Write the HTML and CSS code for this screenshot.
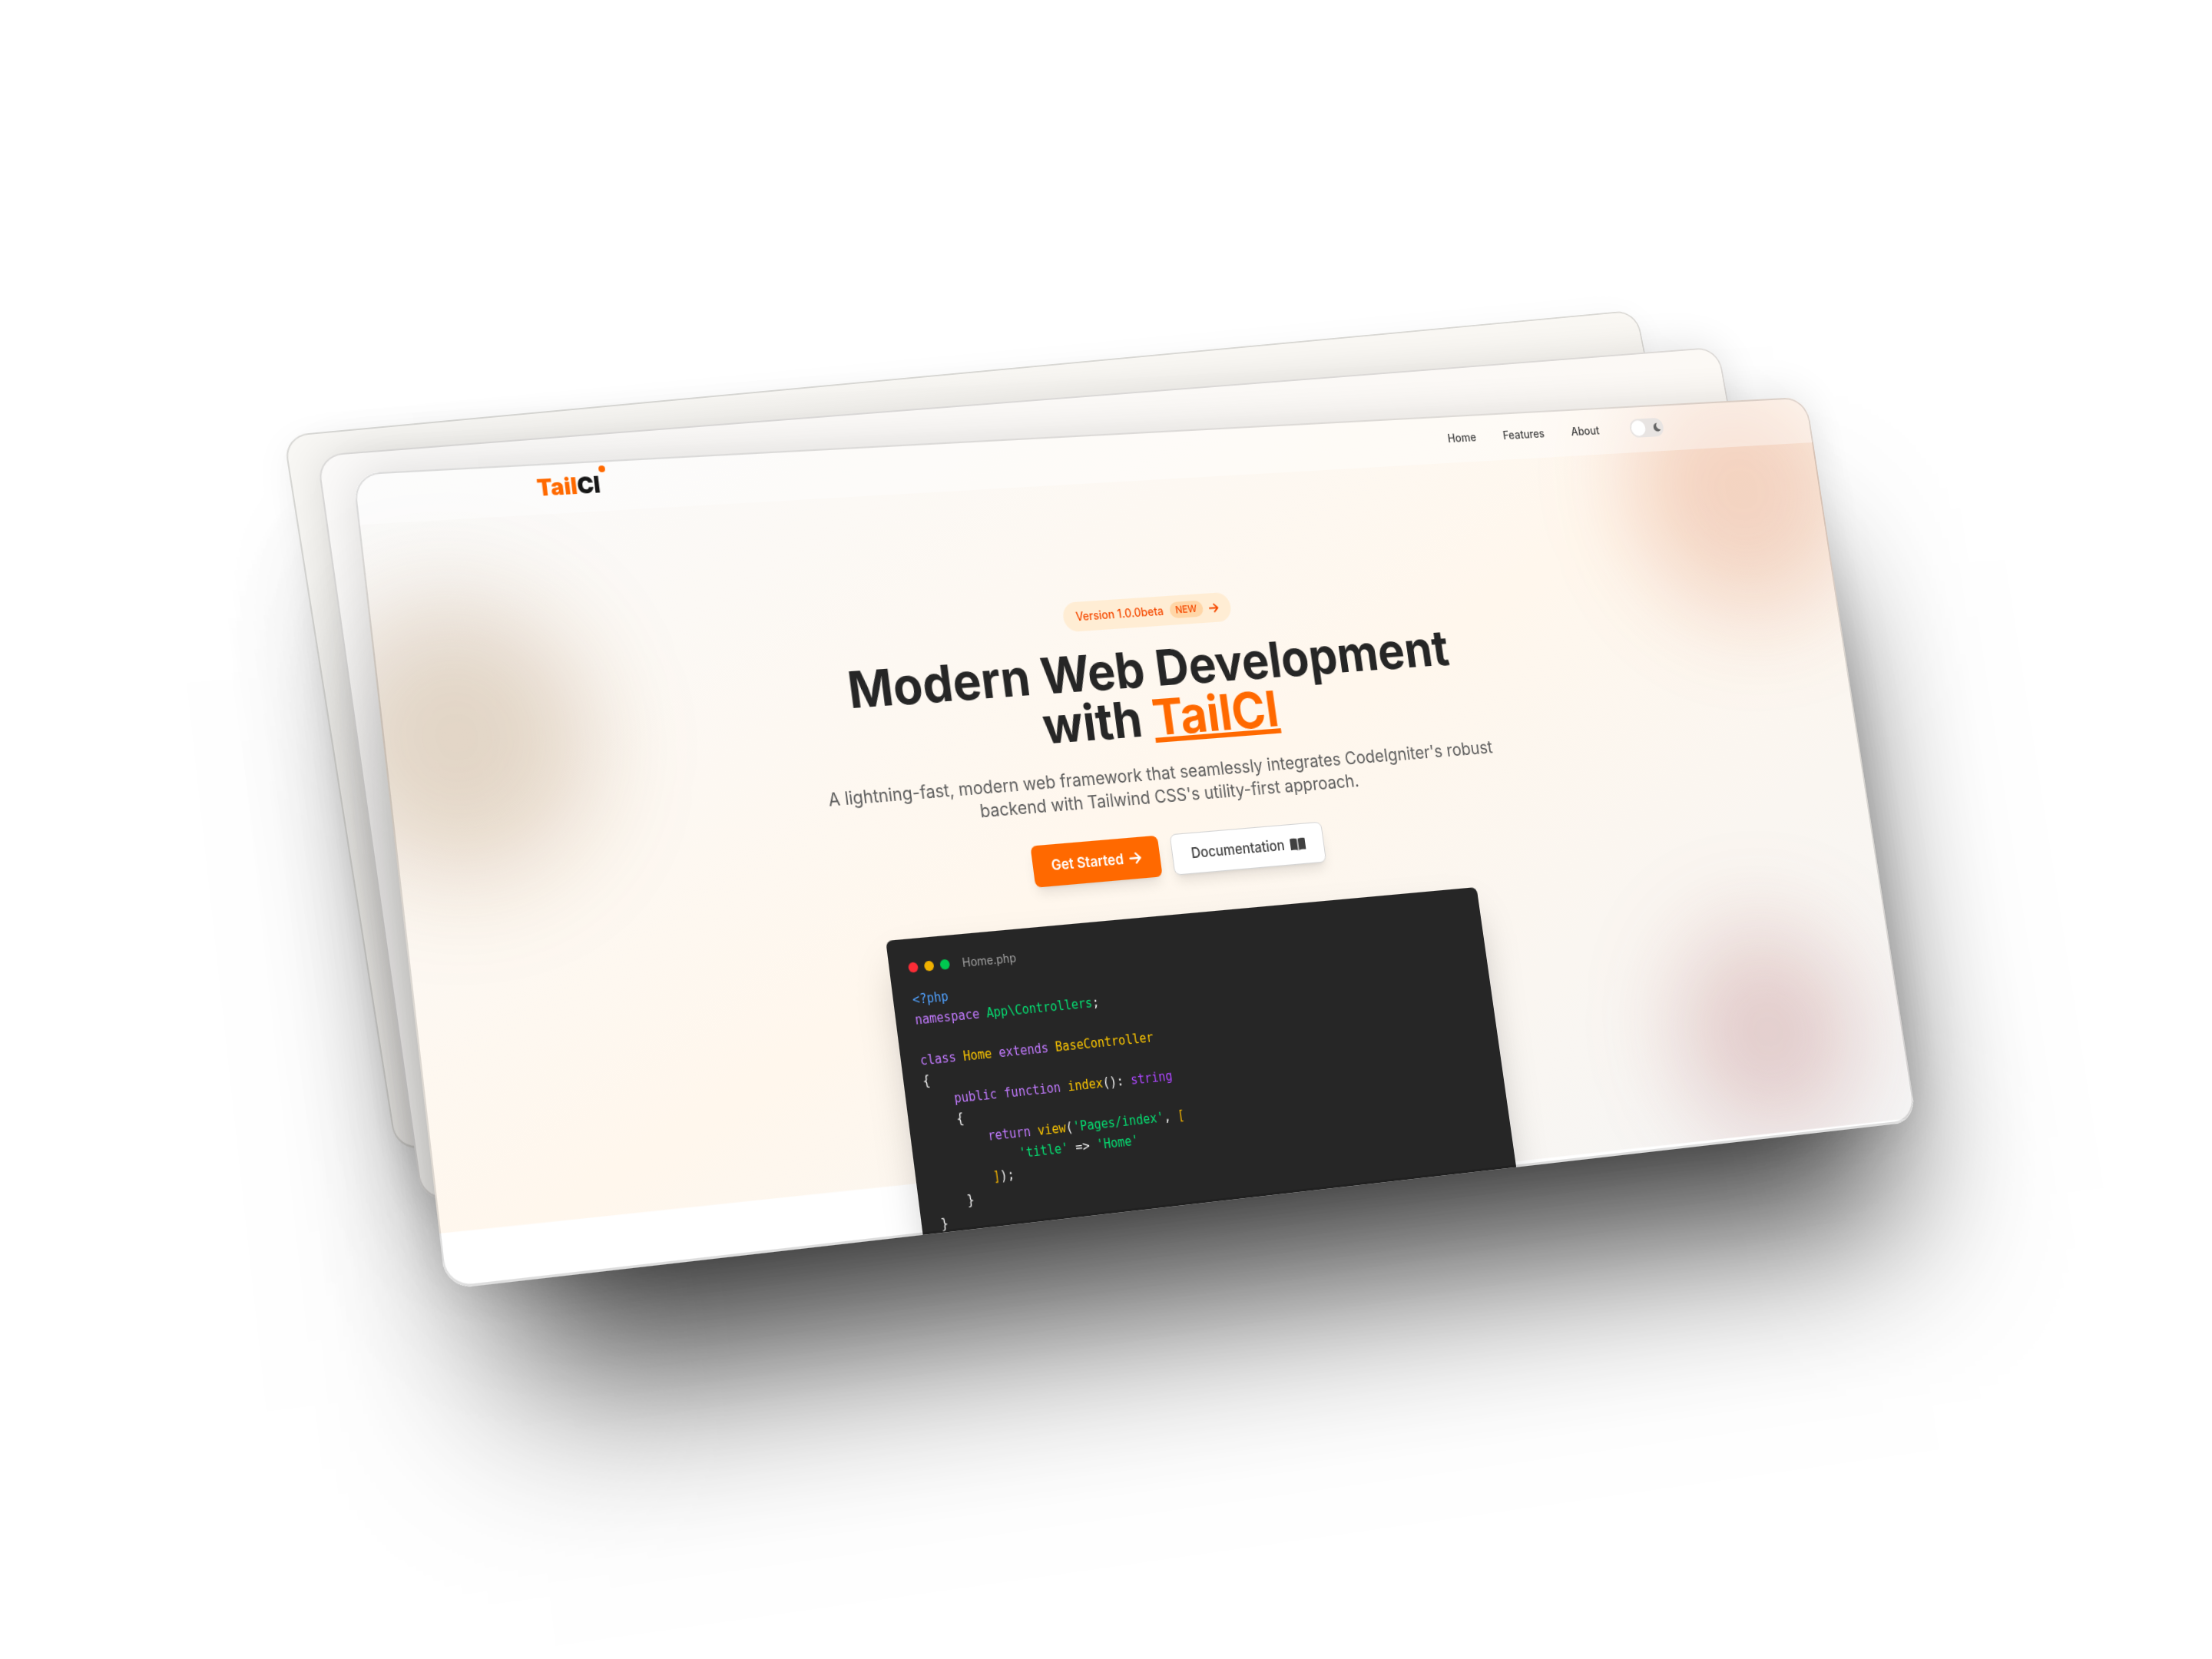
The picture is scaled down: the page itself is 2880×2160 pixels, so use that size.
FILE: index.html
```html
<!DOCTYPE html>
<html lang="en">
<head>
<meta charset="utf-8">
<meta name="viewport" content="width=device-width, initial-scale=1">
<title>TailCI</title>
<link rel="stylesheet" href="styles.css">
</head>
<body>
<div class="stage">
  <div class="deck">
    <div class="card card-back"></div>
    <div class="card card-middle"></div>
    <div class="card card-front">
      <div class="screen">
        <div class="backdrop">
          <span class="blob blob-amber"></span>
          <span class="blob blob-orange"></span>
          <span class="blob blob-red"></span>
        </div>

        <header class="navbar">
          <a class="logo" href="#"><span class="logo-accent">Tail</span>CI<span class="logo-dot"></span></a>
          <nav class="menu">
            <a href="#">Home</a>
            <a href="#">Features</a>
            <a href="#">About</a>
            <label class="theme">
              <input class="theme-input" type="checkbox" aria-label="Dark mode">
              <svg class="theme-moon" viewBox="0 0 12 12" width="12" height="12"><path d="M6.500.5A5.500 5.500 0 1 0 10.800 9.200 5.200 5.200 0 0 1 6.500.5z" fill="#666"/></svg>
            </label>
          </nav>
        </header>

        <main class="hero">
          <a class="badge" href="#">
            Version 1.0.0beta
            <span class="badge-tag">NEW</span>
            <svg viewBox="0 0 14 14" width="13" height="13"><path d="M1 7h11M7.5 2l5 5-5 5" fill="none" stroke="currentColor" stroke-width="2" stroke-linecap="round" stroke-linejoin="round"/></svg>
          </a>
          <h1 class="title">Modern Web Development<br>with <span class="title-accent">TailCI</span></h1>
          <p class="lead">A lightning-fast, modern web framework that seamlessly integrates CodeIgniter's robust<br>backend with Tailwind CSS's utility-first approach.</p>
          <div class="actions">
            <a class="button button-primary" href="#">Get Started
              <svg viewBox="0 0 14 14" width="16" height="16"><path d="M1 7h11.500M7.500 2l5 5-5 5" fill="none" stroke="currentColor" stroke-width="2" stroke-linecap="round" stroke-linejoin="round"/></svg>
            </a>
            <a class="button button-plain" href="#">Documentation
              <svg viewBox="0 0 20 16" width="20" height="16"><path d="M9.400 1.700C7.600.8 4.500.4 1.200.9.500 1 0 1.300 0 1.800v12.400c0 .6.500 1 1.100.9 3.300-.5 6.400-.3 8.300.6zM10.600 1.700c1.800-.9 4.900-1.300 8.200-.8.7.1 1.200.4 1.200.9v12.400c0 .6-.5 1-1.100.9-3.300-.5-6.400-.3-8.300.6z" fill="#404040"/></svg>
            </a>
          </div>

          <section class="editor">
            <div class="editor-bar">
              <span class="light light-red"></span>
              <span class="light light-yellow"></span>
              <span class="light light-green"></span>
              <span class="editor-file">Home.php</span>
            </div>
<pre class="code"><code><span class="c-tag">&lt;?php</span>
<span class="c-key">namespace</span> <span class="c-str">App\Controllers</span>;

<span class="c-key">class</span> <span class="c-name">Home</span> <span class="c-key">extends</span> <span class="c-name">BaseController</span>
{
    <span class="c-key">public</span> <span class="c-key">function</span> <span class="c-name">index</span>(): <span class="c-type">string</span>
    {
        <span class="c-key">return</span> <span class="c-name">view</span>(<span class="c-str">'Pages/index'</span>, <span class="c-bracket">[</span>
            <span class="c-str">'title'</span> =&gt; <span class="c-str">'Home'</span>
        <span class="c-bracket">]</span>);
    }
}</code></pre>
          </section>
        </main>
      </div>
    </div>
  </div>
</div>
</body>
</html>
```
FILE: styles.css
```css
* {
  box-sizing: border-box;
}

body {
  margin: 0;
  background: #fff;
  color: #262626;
  font-family: Inter, "Open Sans", sans-serif;
}

a {
  color: inherit;
  text-decoration: none;
}

/* The deck hangs from the middle of the window; each card is tilted from there. */
.stage {
  display: grid;
  place-items: center;
  min-height: 100vh;
  overflow: hidden;
}

.deck {
  position: relative;
  width: 0;
  height: 0;
}

.card {
  position: absolute;
  top: 0;
  left: 0;
  width: 1920px;
  height: 937px;
  border-radius: 32px;
  transform-origin: 0 0;
}

.card-back::after,
.card-middle::after,
.screen::after {
  content: "";
  position: absolute;
  inset: 0;
  border: 2px solid rgba(0, 0, 0, 0.13);
  border-bottom-width: 3px;
  border-radius: 32px;
  pointer-events: none;
}

.card-back {
  background: linear-gradient(135deg, #f9f8f5, #fbf8f3);
  box-shadow:
    0 10px 50px rgba(0, 0, 0, 0.05),
    20px 120px 150px -50px rgba(0, 0, 0, 0.28);
  transform: matrix3d(0.960948, -0.127625, 0, 0.0000626177, 0.178164, 0.985955, 0, -0.0000230149, 0, 0, 1, 0, -1071.5, -512.9, 0, 1);
}

.card-middle {
  background: linear-gradient(135deg, #fbfaf9, #fefaf5);
  box-shadow:
    0 0 60px rgba(0, 0, 0, 0.12),
    20px 140px 180px -60px rgba(0, 0, 0, 0.36);
  transform: matrix3d(1.000969, -0.113276, 0, 0.000063295, 0.165486, 1.02873, 0, -0.000021047, 0, 0, 1, 0, -1028, -487.5, 0, 1);
}

.card-front {
  box-shadow:
    0 0 60px rgba(0, 0, 0, 0.12),
    20px 170px 200px -60px rgba(0, 0, 0, 0.74);
  transform: matrix3d(1.04321, -0.087578, 0, 0.000062911, 0.148431, 1.120288, 0, -0.0000220939, 0, 0, 1, 0, -981, -463.3, 0, 1);
}

.screen {
  position: relative;
  height: 100%;
  overflow: hidden;
  border-radius: 32px;
  background: #fff;
}

.backdrop {
  position: absolute;
  inset: 0;
  background: linear-gradient(to bottom right, #fafafa, #fff7ed 50%, #f5f5f5);
  clip-path: polygon(0 0, 100% 0, 100% 932px, 70% 930px, 30% 877px, 0 874px);
}

.blob {
  position: absolute;
  width: 320px;
  height: 320px;
  border-radius: 50%;
  filter: blur(64px);
}

.blob-amber {
  top: 153px;
  left: -73px;
  background: rgba(124, 69, 12, 0.2);
}

.blob-orange {
  top: -44px;
  right: -45px;
  background: rgba(205, 80, 30, 0.21);
}

.blob-red {
  right: 64px;
  bottom: 4px;
  width: 256px;
  height: 256px;
  background: rgba(148, 55, 57, 0.22);
}

.navbar {
  position: relative;
  display: flex;
  align-items: center;
  justify-content: space-between;
  height: 60px;
  padding: 0 214px 2px 217px;
  background: rgba(255, 255, 255, 0.4);
}

.logo {
  position: relative;
  color: #171717;
  font-size: 27px;
  font-weight: 900;
  line-height: 36px;
}

.logo-accent {
  color: #ff6900;
}

.logo-dot {
  position: absolute;
  top: -5px;
  right: -8px;
  width: 8px;
  height: 8px;
  border-radius: 50%;
  background: #ff6900;
}

.menu {
  display: flex;
  align-items: center;
  gap: 38px;
  color: #404040;
  font-size: 14px;
  font-weight: 500;
  line-height: 20px;
}

.theme {
  position: relative;
  display: flex;
  margin-left: 6px;
}

.theme-input {
  appearance: none;
  display: flex;
  align-items: center;
  width: 48px;
  height: 24px;
  margin: 0;
  padding: 0 2px;
  border-radius: 12px;
  background: #e8e4e2;
}

.theme-input::before {
  content: "";
  width: 20px;
  height: 20px;
  border-radius: 50%;
  background: #fff;
}

.theme-moon {
  position: absolute;
  top: 6px;
  right: 3px;
}

.hero {
  position: relative;
  display: flex;
  flex-direction: column;
  align-items: center;
  padding: 144px 0 0 7px;
  text-align: center;
}

.badge {
  display: flex;
  align-items: center;
  gap: 8px;
  height: 36px;
  padding: 0 16px;
  border-radius: 18px;
  background: #ffedd4;
  color: #f54900;
  font-size: 14px;
  font-weight: 500;
  line-height: 20px;
}

.badge-tag {
  padding: 2px 8px;
  border-radius: 10px;
  background: #ffd6a7;
  font-size: 12px;
  font-weight: 500;
  line-height: 16px;
}

.title {
  margin: 21px 0 0;
  font-size: 61px;
  font-weight: 700;
  line-height: 60px;
}

.title-accent {
  color: #ff6900;
  text-decoration: underline;
  text-decoration-thickness: 6px;
  text-underline-offset: 3px;
}

.lead {
  margin: 25px 0 0;
  color: #5c5c5c;
  font-size: 21px;
  line-height: 28px;
}

.actions {
  display: flex;
  gap: 16px;
  margin-top: 32px;
}

.button {
  display: flex;
  align-items: center;
  gap: 8px;
  height: 50px;
  padding: 0 24px;
  border-radius: 8px;
  font-size: 17px;
  font-weight: 500;
  line-height: 24px;
  box-shadow: 0 10px 15px -3px rgba(0, 0, 0, 0.1), 0 4px 6px -4px rgba(0, 0, 0, 0.1);
}

.button-primary {
  background: #ff6900;
  color: #fff;
  font-weight: 600;
}

.button-plain {
  border: 1px solid #d4d4d4;
  background: #fff;
  color: #404040;
}

.editor {
  width: 777px;
  margin-top: 47px;
  padding: 24px;
  border-radius: 8px;
  background: #262626;
  box-shadow: 0 25px 50px -12px rgba(0, 0, 0, 0.25);
  text-align: left;
}

.editor-bar {
  display: flex;
  align-items: center;
  gap: 8px;
  height: 20px;
}

.light {
  width: 12px;
  height: 12px;
  border-radius: 50%;
}

.light-red {
  background: #fb2c36;
}

.light-yellow {
  background: #f0b100;
}

.light-green {
  background: #00c950;
}

.editor-file {
  margin-left: 8px;
  color: #a1a1a1;
  font-size: 14px;
  line-height: 20px;
}

.code {
  margin: 16px 0 0;
  color: #f5f5f5;
  font-family: "DejaVu Sans Mono", monospace;
  font-size: 15px;
  line-height: 24px;
}

.code code {
  font-family: inherit;
}

.c-tag {
  color: #51a2ff;
}

.c-key {
  color: #c27aff;
}

.c-str {
  color: #05df72;
}

.c-name {
  color: #fdc700;
}

.c-type {
  color: #ad46ff;
}

.c-bracket {
  color: #f0b100;
}
```
